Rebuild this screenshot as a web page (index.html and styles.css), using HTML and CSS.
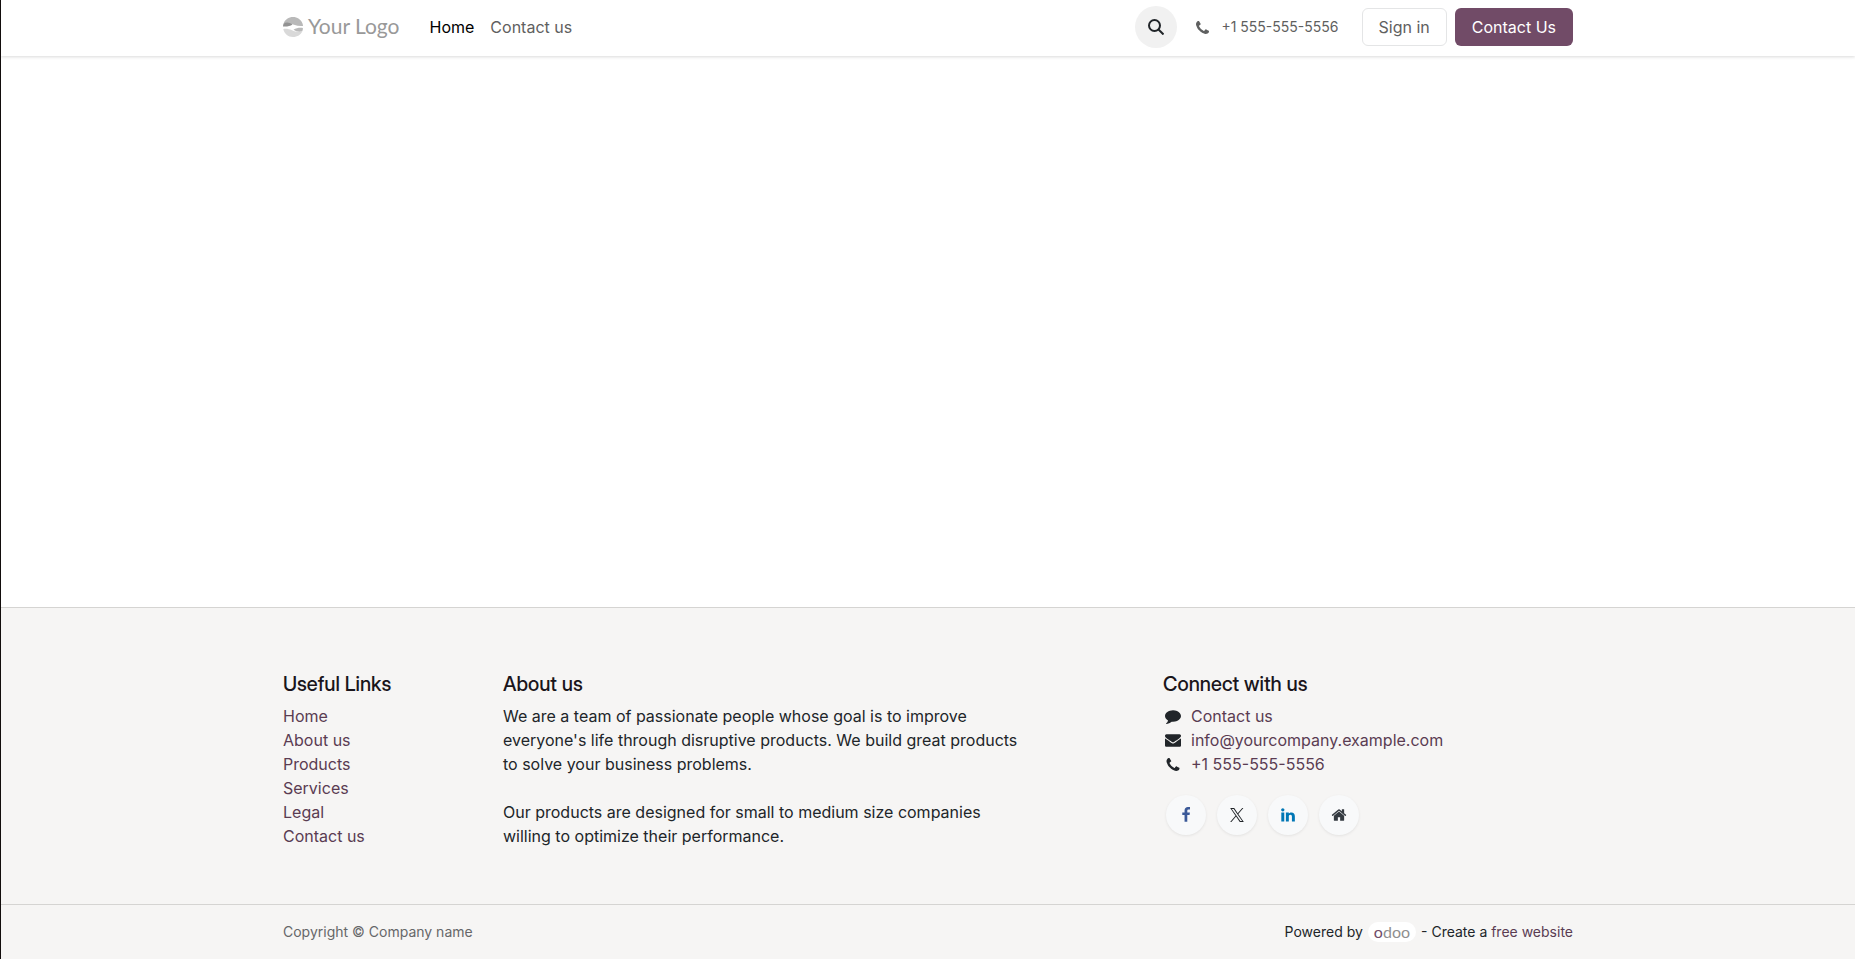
FILE: index.html
```html
<!DOCTYPE html>
<html lang="en">
<head>
<meta charset="utf-8">
<title>Home | Your Logo</title>
<link rel="stylesheet" href="styles.css">
</head>
<body>
<svg class="sprite" aria-hidden="true">
  <symbol id="phone" viewBox="0 0 1408 1408"><path d="M1408 1112q0 27-10 70.5t-21 68.5q-21 50-122 106-94 51-186 51-27 0-53-3.5t-57.5-12.5-47-14.5-55.5-20.5-49-18q-98-35-175-83-127-79-264-216t-216-264q-48-77-83-175-3-9-18-49t-20.5-55.5-14.5-47-12.5-57.5-3.5-53q0-92 51-186 56-101 106-122 25-11 68.500-21t70.500-10q14 0 21 3 18 6 53 76 11 19 30 54t35 63.500 31 53.500q3 4 17.500 25t21.500 35.500 7 28.500q0 20-28.500 50t-62 55-62 53-28.500 46q0 9 5 22.500t8.500 20.500 14 24 11.500 19q76 137 174 235t235 174q2 1 19 11.500t24 14 20.500 8.500 22.500 5q18 0 46-28.500t53-62 55-62 50-28.500q14 0 28.500 7t35.500 21.500 25 17.500q25 15 53.500 31t63.500 35 54 30q70 35 76 53 3 7 3 21z"/></symbol>
</svg>
<header class="header">
  <div class="container header-row">
    <a class="logo" href="#">
      <svg class="logo-mark" viewBox="0 0 20 20" aria-hidden="true">
        <path fill="#b9b9b9" d="M.6 6.500C2 2.500 5.700 0 10 0s8 2.500 9.500 6.500c.4 1 .5 2 .5 2.500-3 .3-6-.1-9-1.300C7 6.200 3.500 5.500.6 6.500z"/>
        <path fill="#929292" d="M.6 6.500C3.500 4.800 7 5.700 9.500 7.400 7 9.200 3.500 9.800 0 9.400c0-1 .2-2 .6-2.900z"/>
        <path fill="#d9d9d9" d="M.3 12c3-.5 5.700 0 8.700 1.300 4 1.700 7.500 2.300 10.500.7C18 17.700 14.300 20 10 20 5 20 1.200 16.600.3 12z"/>
        <path fill="#b9b9b9" d="M10.500 12.800c3-1.800 6-2.300 9.400-1.800 0 1-.1 2-.5 3-3 1.600-6 .6-8.900-1.200z"/>
      </svg>
      <span class="logo-text">Your Logo</span>
    </a>
    <nav class="nav">
      <a class="nav-link active" href="#">Home</a>
      <a class="nav-link" href="#">Contact us</a>
    </nav>
    <button class="search" type="button" aria-label="Search">
      <svg width="16" height="16" viewBox="0 0 16 16" fill="none" stroke="currentColor" stroke-width="2" aria-hidden="true"><circle cx="6.500" cy="6.500" r="5.500"/><path d="M10.500 10.500l5 5"/></svg>
    </button>
    <a class="phone" href="#"><svg class="phone-icon" aria-hidden="true"><use href="#phone"/></svg>+1 555-555-5556</a>
    <div class="actions">
      <button class="btn btn-light" type="button">Sign in</button>
      <button class="btn btn-primary" type="button">Contact Us</button>
    </div>
  </div>
</header>
<main class="main"></main>
<footer class="footer">
  <div class="container footer-grid">
    <section class="col-links">
      <h2 class="title">Useful Links</h2>
      <ul class="list">
        <li><a class="link" href="#">Home</a></li>
        <li><a class="link" href="#">About us</a></li>
        <li><a class="link" href="#">Products</a></li>
        <li><a class="link" href="#">Services</a></li>
        <li><a class="link" href="#">Legal</a></li>
        <li><a class="link" href="#">Contact us</a></li>
      </ul>
    </section>
    <section class="col-about">
      <h2 class="title">About us</h2>
      <p class="text">We are a team of passionate people whose goal is to improve everyone's life through disruptive products. We build great products to solve your business problems.</p>
      <p class="text">Our products are designed for small to medium size companies willing to optimize their performance.</p>
    </section>
    <section class="col-connect">
      <h2 class="title">Connect with us</h2>
      <ul class="list">
        <li class="contact"><svg class="contact-icon" viewBox="0 0 1792 1792" aria-hidden="true"><path d="M1792 896q0 174-120 321.500t-326 233-450 85.500q-70 0-145-8-198 175-460 242-49 14-114 22-17 2-30.500-9t-17.500-29v-1q-3-4-.5-12t2-10 4.500-9.500l6-9 7-8.500 8-9q7-8 31-34.500t34.500-38 31-39.500 32.500-51 27-59 26-76q-157-89-247.500-220t-90.500-281q0-130 71-248.500t191-204.500 286-136.500 348-50.500q244 0 450 85.500t326 233 120 321.500z"/></svg><a class="link" href="#">Contact us</a></li>
        <li class="contact"><svg class="contact-icon" viewBox="0 0 1792 1792" aria-hidden="true"><path d="M1792 710v794q0 66-47 113t-113 47h-1472q-66 0-113-47t-47-113v-794q44 49 101 87 362 246 497 345 57 42 92.500 65.500t94.500 48 110 24.500h2q51 0 110-24.500t94.500-48 92.500-65.500q170-123 498-345 57-39 100-87zm0-294q0 79-49 151t-122 123q-376 261-468 325-10 7-42.500 31t-54 38.500-52 32.500-57.500 27-50 9h-2q-23 0-50-9t-57.500-27-52-32.500-54-38.500-42.500-31q-91-64-262-182.500t-205-142.500q-62-42-117-115.500t-55-136.500q0-78 41.500-130t118.500-52h1472q65 0 112.500 47t47.500 113z"/></svg><a class="link" href="#">info@yourcompany.example.com</a></li>
        <li class="contact"><svg class="contact-icon contact-phone" aria-hidden="true"><use href="#phone"/></svg><a class="link" href="#">+1 555-555-5556</a></li>
      </ul>
      <div class="social">
        <a class="social-link" href="#" aria-label="Facebook"><svg width="16" height="16" viewBox="0 0 1792 1792" fill="#3b5998"><path d="M1343 12v264h-157q-86 0-116 36t-30 108v189h293l-39 296h-254v759h-306v-759h-255v-296h255v-218q0-186 104-288.500t277-102.500q147 0 228 12z"/></svg></a>
        <a class="social-link" href="#" aria-label="X"><svg width="14" height="14" viewBox="0 0 1200 1227" fill="#212529"><path d="M714.163 519.284L1160.890 0H1055.030L667.137 450.887L357.328 0H0L468.492 681.821L0 1226.370H105.866L515.491 750.218L842.672 1226.370H1200L714.137 519.284H714.163ZM569.165 687.828L521.697 619.934L144.011 79.694H306.615L611.412 515.685L658.880 583.579L1055.080 1150.300H892.476L569.165 687.854V687.828Z"/></svg></a>
        <a class="social-link" href="#" aria-label="LinkedIn"><svg width="16" height="16" viewBox="0 0 1792 1792" fill="#0077b5"><path d="M477 625v991h-330v-991h330zm21-306q1 73-50.500 122t-135.500 49h-2q-82 0-132-49t-50-122q0-74 51.500-122.500t134.500-48.500 133 48.500 51 122.500zm1166 729v568h-329v-530q0-105-40.500-164.500t-126.500-59.500q-63 0-105.500 34.500t-63.500 85.500q-11 30-11 81v553h-329q2-399 2-647t-1-296l-1-48h329v144h-2q20-32 41-56t56.500-52 87-43.500 114.500-15.500q171 0 275 113.500t104 332.500z"/></svg></a>
        <a class="social-link" href="#" aria-label="Home"><svg width="16" height="16" viewBox="0 0 1792 1792" fill="#343a40"><path d="M1472 992v480q0 26-19 45t-45 19h-384v-384h-256v384h-384q-26 0-45-19t-19-45v-480q0-1 .5-3t.5-3l575-474 575 474q1 2 1 6zm223-69l-62 74q-8 9-21 11h-3q-13 0-21-7l-692-577-692 577q-12 8-24 7-13-2-21-11l-62-74q-8-10-7-23.500t11-21.500l719-599q32-26 76-26t76 26l244 204v-195q0-14 9-23t23-9h192q14 0 23 9t9 23v408l219 182q10 8 11 21.500t-7 23.500z"/></svg></a>
      </div>
    </section>
  </div>
  <div class="bottom">
    <div class="container bottom-row">
      <span class="copyright">Copyright © Company name</span>
      <div class="powered">
        <span>Powered by</span>
        <a class="badge" href="#"><span class="badge-o">o</span>doo</a>
        <span>- Create a <a class="link" href="#">free website</a></span>
      </div>
    </div>
  </div>
</footer>
</body>
</html>
```
FILE: styles.css
```css
* {
  box-sizing: border-box;
}

body {
  display: flex;
  flex-direction: column;
  min-height: 100vh;
  margin: 0;
  border-left: 1px solid #120d0c;
  background: #fff;
  color: #212529;
  font: 16px/24px Inter, "Liberation Sans", sans-serif;
}

a {
  color: inherit;
  text-decoration: none;
}

.sprite {
  display: none;
}

.container {
  width: 100%;
  max-width: 1320px;
  margin: 0 auto;
  padding: 0 15px;
}

.header {
  padding: 6px 0 8px;
  box-shadow: 0 1px 3px rgba(0, 0, 0, 0.15);
}

.header-row {
  display: flex;
  align-items: center;
}

.logo {
  display: flex;
  align-items: center;
  gap: 5px;
  margin-right: 22px;
  color: #999;
}

.logo-mark {
  width: 20px;
  height: 20px;
}

.logo-text {
  padding-bottom: 2px;
  font-family: Lato, sans-serif;
  font-size: 21px;
}

.nav {
  display: flex;
  margin-right: auto;
}

.nav-link {
  padding: 0 8px;
  color: #5f6060;
}

.nav-link.active {
  color: #000;
}

.search {
  display: flex;
  align-items: center;
  justify-content: center;
  width: 42px;
  height: 42px;
  padding: 0;
  border: 0;
  border-radius: 50%;
  background: #f1f1f1;
  color: #212529;
}

.phone {
  display: flex;
  align-items: center;
  gap: 12px;
  margin: 0 23px 0 19px;
  color: #5f6060;
  font-size: 14px;
}

.phone-icon {
  width: 13px;
  height: 13px;
  fill: currentColor;
}

.actions {
  display: flex;
  gap: 8px;
}

.btn {
  height: 38px;
  padding: 0 16px;
  border: 1px solid transparent;
  border-radius: 6px;
  font: inherit;
}

.btn-light {
  border-color: #e4e5e6;
  background: #fff;
  color: #5f6060;
}

.btn-primary {
  background: #714b67;
  color: #fff;
}

.main {
  flex: 1;
}

.footer {
  border-top: 1px solid #d5d4d2;
  background: #f6f5f4;
}

.footer-grid {
  display: grid;
  grid-template-columns: repeat(12, 1fr);
  column-gap: 30px;
  padding-top: 64px;
  padding-bottom: 56px;
}

.col-links {
  grid-column: 1 / span 2;
}

.col-about {
  grid-column: 3 / span 5;
}

.col-connect {
  grid-column: 9 / span 3;
}

.title {
  margin: 0 0 8px;
  color: #1a151b;
  font-family: "Inter Display", Inter, "Liberation Sans", sans-serif;
  font-size: 20px;
  font-variation-settings: "opsz" 32;
  font-weight: 500;
  line-height: 24px;
}

.list {
  margin: 0;
  padding: 0;
  list-style: none;
}

.link {
  color: #5a3c52;
}

.text {
  margin: 0 0 24px;
}

.text:last-child {
  margin-bottom: 0;
}

.contact {
  display: flex;
  align-items: center;
  gap: 10px;
  padding-left: 2px;
}

.contact-icon {
  width: 16px;
  height: 16px;
  fill: currentColor;
}

.contact-phone {
  height: 13px;
}

.social {
  display: flex;
  gap: 11px;
  margin: 19px 0 0 3px;
}

.social-link {
  display: flex;
  align-items: center;
  justify-content: center;
  width: 40px;
  height: 40px;
  border-radius: 50%;
  background: #f8f9fa;
  box-shadow: 0 1px 3px rgba(0, 0, 0, 0.08);
}

.bottom {
  border-top: 1px solid #d5d4d2;
  font-size: 14px;
}

.bottom-row {
  display: flex;
  align-items: center;
  justify-content: space-between;
  padding-top: 15px;
  padding-bottom: 15px;
}

.copyright {
  color: #666769;
}

.powered {
  display: flex;
  align-items: center;
  gap: 5px;
}

.badge {
  padding: 0 6px;
  border-radius: 10px;
  background: #fff;
  color: #8f8f8f;
  font: 16px/20px Lato, sans-serif;
}

.badge-o {
  color: #714b67;
}
```
